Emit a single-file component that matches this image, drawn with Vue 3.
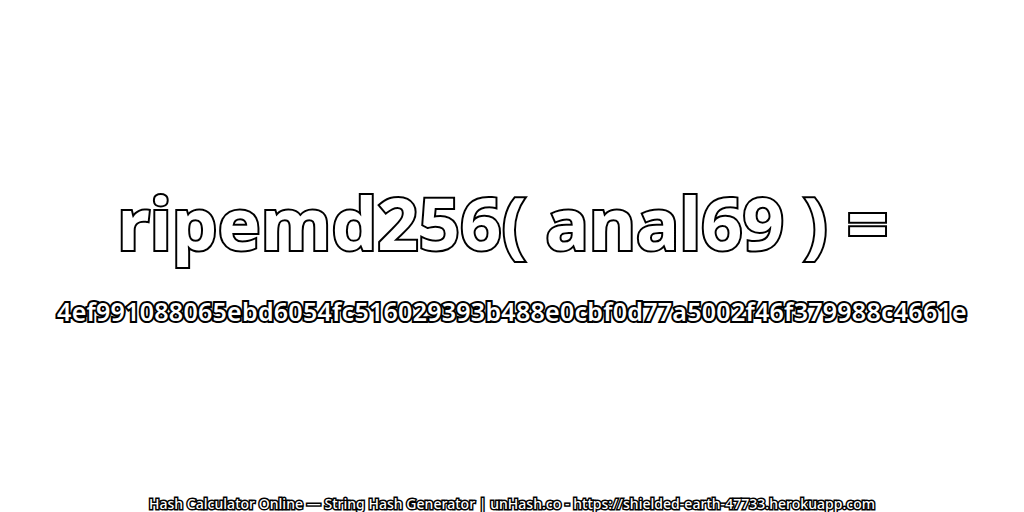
<template>
  <div class="page">
    <div class="main">
      <h1 class="title">ripemd256( anal69 ) =</h1>
      <div class="hash">4ef991088065ebd6054fc516029393b488e0cbf0d77a5002f46f379988c4661e</div>
    </div>
    <div class="footer">Hash Calculator Online — String Hash Generator | unHash.co - https://shielded-earth-47733.herokuapp.com</div>
  </div>
</template>

<script setup>
</script>

<style scoped>
.page {
  display: flex;
  flex-direction: column;
  align-items: center;
  width: 1024px;
  height: 512px;
  overflow: hidden;
  background: #fff;
  font-family: "Noto Sans", "Open Sans", sans-serif;
  color: #fff;
  white-space: nowrap;
  paint-order: stroke fill;
  -webkit-text-stroke-color: #000;
}
.main {
  flex: 1;
  display: flex;
  flex-direction: column;
  align-items: center;
  padding-top: 176px;
}
.title {
  margin: 0;
  padding-right: 18px;
  font-size: 72px;
  line-height: 92px;
  font-weight: 700;
  letter-spacing: 0.3px;
  -webkit-text-stroke-width: 4px;
}
.hash {
  margin-top: 27px;
  font-size: 25px;
  line-height: 32px;
  font-weight: 600;
  letter-spacing: 0.26px;
  -webkit-text-stroke-width: 4px;
}
.footer {
  height: 16px;
  font-size: 14px;
  line-height: 16px;
  font-weight: 500;
  letter-spacing: 0.03px;
  -webkit-text-stroke-width: 3px;
}
</style>
